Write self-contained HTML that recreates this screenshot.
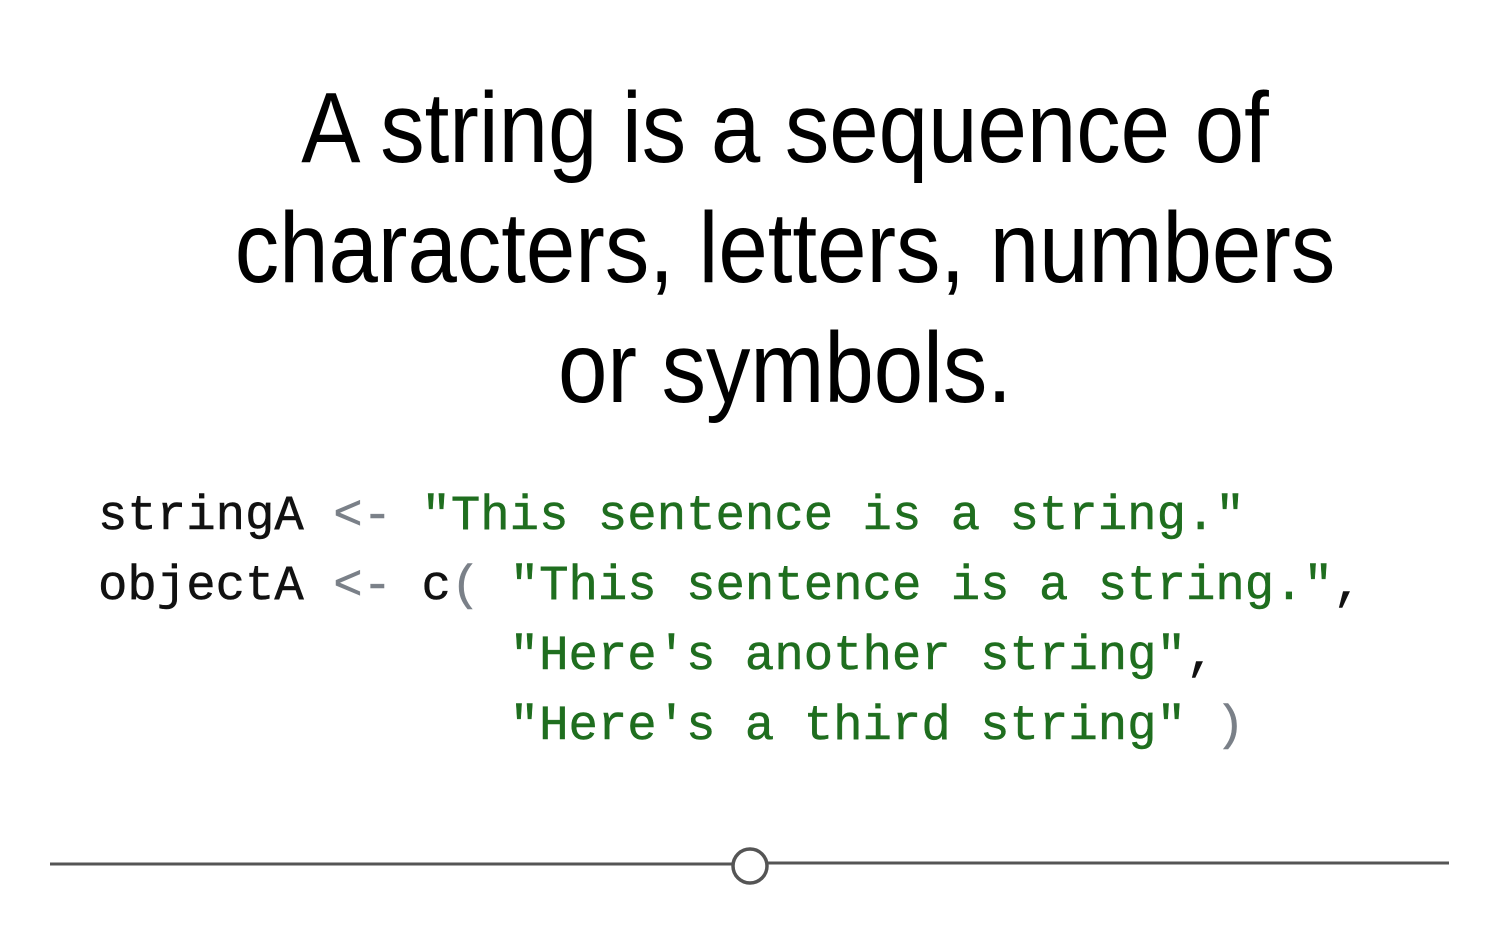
<!DOCTYPE html>
<html><head><style>
html,body{margin:0;padding:0;background:#fff;width:1500px;height:938px;overflow:hidden;position:relative}
.t{position:absolute;left:0;width:1768px;text-align:center;font-family:"Liberation Sans",sans-serif;font-size:100px;color:#000;line-height:120px;top:68px;transform:scaleX(0.888);transform-origin:0 0}
.c{position:absolute;left:98px;top:481px;font-family:"Liberation Mono",monospace;font-size:49px;line-height:70px;white-space:pre;color:#111;-webkit-text-stroke:0.5px currentColor}
.o{color:#7a8088}.s{color:#1f6e1f}
</style></head><body>
<div class="t">A string is a sequence of<br>characters, letters, numbers<br>or symbols.</div>
<div class="c">stringA <span class="o">&lt;-</span> <span class="s">"This sentence is a string."</span>
objectA <span class="o">&lt;-</span> c<span class="o">(</span> <span class="s">"This sentence is a string."</span>,
              <span class="s">"Here's another string"</span>,
              <span class="s">"Here's a third string"</span> <span class="o">)</span></div>
<svg style="position:absolute;left:0;top:0" width="1500" height="938">
<line x1="50" y1="864" x2="732" y2="864" stroke="#555" stroke-width="3"/>
<line x1="768" y1="863" x2="1449" y2="863" stroke="#555" stroke-width="3"/>
<circle cx="750" cy="866" r="17" fill="#fff" stroke="#555" stroke-width="3.5"/>
</svg>
</body></html>
